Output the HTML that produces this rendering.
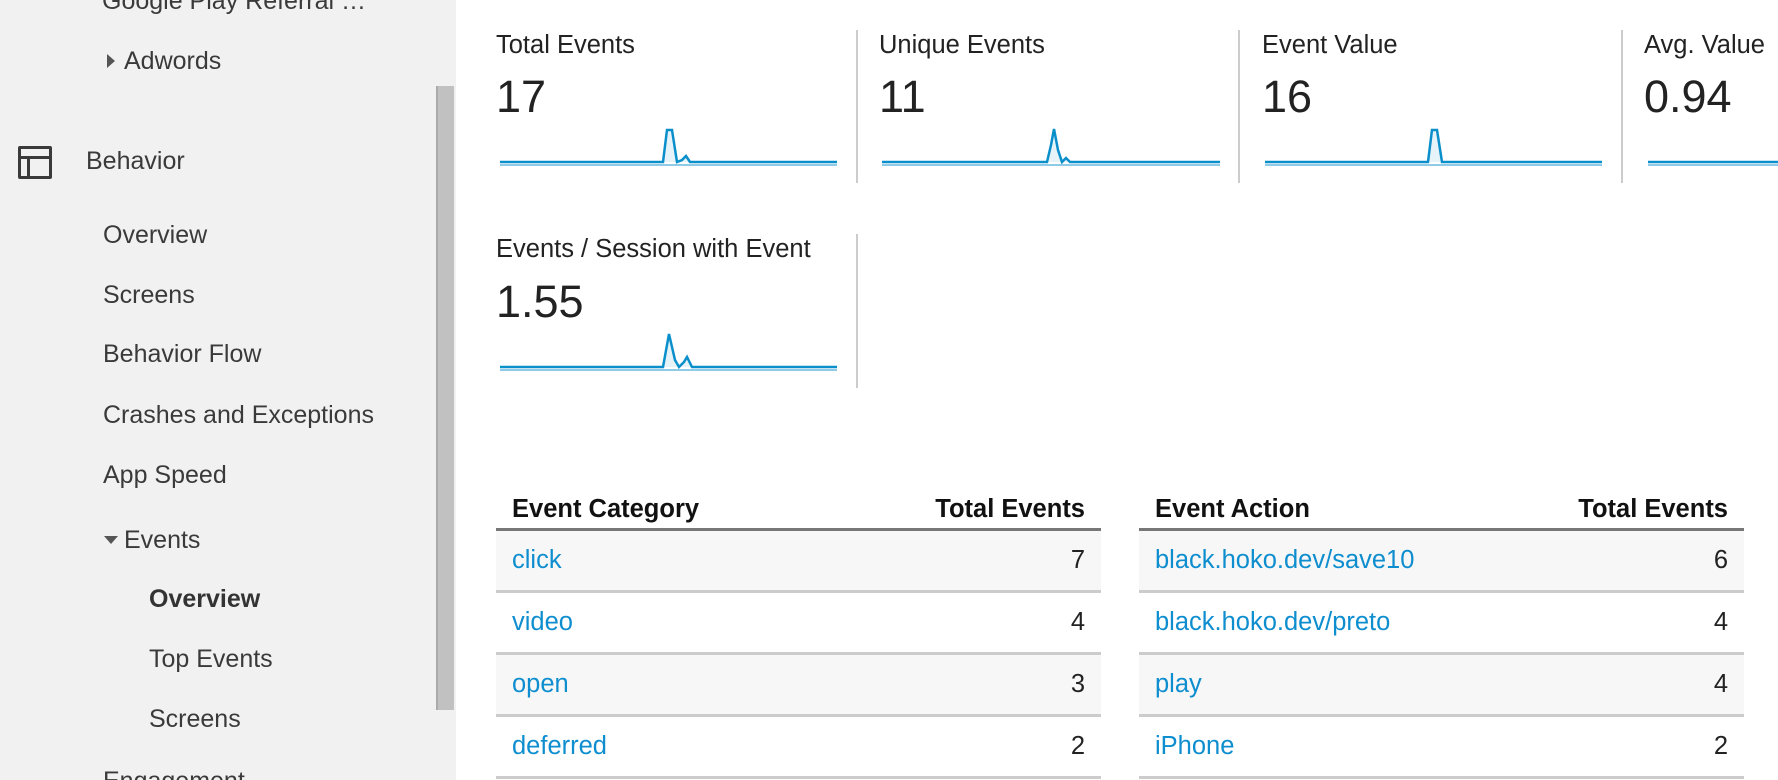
<!DOCTYPE html>
<html style="width:1778px;height:780px;overflow:hidden"><head><meta charset="utf-8"><style>
*{margin:0;padding:0;box-sizing:border-box}
body{width:1778px;height:780px;overflow:hidden;background:#fff;font-family:"Liberation Sans",Arial,sans-serif;position:relative}
.side{position:absolute;left:0;top:0;width:456px;height:780px;background:#f1f1f1;overflow:hidden}
.scroll{position:absolute;left:436px;top:86px;width:18px;height:624px;background:#c1c1c1;border-left:2px solid #ababab}
.s{position:absolute;font-size:25px;color:#3a3a3a;line-height:30px;white-space:nowrap}
.t{position:absolute;font-size:25.5px;color:#222;line-height:30px;white-space:nowrap}
.n{position:absolute;font-size:45px;color:#222;line-height:50px}
.div{position:absolute;width:2px;background:#ccc}
table{position:absolute;border-collapse:collapse;font-size:25.5px;top:491px}
th{height:38px;text-align:left;padding:0 16px;color:#111;border-bottom:3px solid #777;vertical-align:middle}
td{height:62px;padding:0 16px;border-bottom:3px solid #ccc;color:#222}
td.a{color:#0e8ecf}
tr.g td{background:#f7f7f7}
.r{text-align:right}
</style></head><body>
<div class="side">
<div class="s" style="left:102px;top:-14px">Google Play Referral …</div>
<div style="position:absolute;left:107px;top:54px;width:0;height:0;border-top:7px solid transparent;border-bottom:7px solid transparent;border-left:8px solid #555"></div>
<div class="s" style="left:124px;top:46px">Adwords</div>
<div style="position:absolute;left:18px;top:146px;width:34px;height:33px;border:3px solid #3a3a3a;border-radius:2px"></div>
<div style="position:absolute;left:21px;top:156px;width:28px;height:3px;background:#3a3a3a"></div>
<div style="position:absolute;left:27px;top:156px;width:3px;height:20px;background:#3a3a3a"></div>
<div class="s" style="left:86px;top:146px">Behavior</div>
<div class="s" style="left:103px;top:220px">Overview</div>
<div class="s" style="left:103px;top:280px">Screens</div>
<div class="s" style="left:103px;top:339px">Behavior Flow</div>
<div class="s" style="left:103px;top:400px">Crashes and Exceptions</div>
<div class="s" style="left:103px;top:460px">App Speed</div>
<div style="position:absolute;left:104px;top:536px;width:0;height:0;border-left:7px solid transparent;border-right:7px solid transparent;border-top:8px solid #555"></div>
<div class="s" style="left:124px;top:525px">Events</div>
<div class="s" style="left:149px;top:584px;font-weight:bold;color:#333">Overview</div>
<div class="s" style="left:149px;top:644px">Top Events</div>
<div class="s" style="left:149px;top:704px">Screens</div>
<div class="s" style="left:103px;top:766px">Engagement</div>
<div class="scroll"></div>
</div>

<div class="t" style="left:496px;top:30px">Total Events</div>
<div class="n" style="left:496px;top:72px">17</div>
<div class="t" style="left:879px;top:30px">Unique Events</div>
<div class="n" style="left:879px;top:72px">11</div>
<div class="t" style="left:1262px;top:30px">Event Value</div>
<div class="n" style="left:1262px;top:72px">16</div>
<div class="t" style="left:1644px;top:30px">Avg. Value</div>
<div class="n" style="left:1644px;top:72px">0.94</div>
<div class="div" style="left:856px;top:30px;height:153px"></div>
<div class="div" style="left:1238px;top:30px;height:153px"></div>
<div class="div" style="left:1621px;top:30px;height:153px"></div>
<div class="t" style="left:496px;top:234px">Events / Session with Event</div>
<div class="n" style="left:496px;top:277px">1.55</div>
<div class="div" style="left:856px;top:234px;height:154px"></div>

<svg width="1778" height="780" style="position:absolute;left:0;top:0" fill="none">
<g stroke="#0b8fcb" stroke-width="2.5" fill="rgba(5,141,199,0.1)">
<path d="M500 162 L663 162 L667 130 L672 130 L677 162 L682 160 L686 156 L690 162 L837 162"/>
<path d="M882 162 L1047 162 L1051 145 L1054 129 L1058 150 L1062 162 L1066 158 L1070 162 L1220 162"/>
<path d="M1265 162 L1428 162 L1432 130 L1437 130 L1442 162 L1602 162"/>
<path d="M1648 162 L1778 162"/>
<path d="M500 367 L663 367 L669 334 L675 360 L679 367 L684 362 L687 357 L692 367 L837 367"/>
</g>
<g stroke="#8fcbe6" stroke-width="2"><path d="M500 165 L837 165 M882 165 L1220 165 M1265 165 L1602 165 M1648 165 L1778 165 M500 370 L837 370"/></g>
</svg>

<table style="left:496px;width:605px">
<tr><th>Event Category</th><th class="r">Total Events</th></tr>
<tr class="g"><td class="a">click</td><td class="r">7</td></tr>
<tr><td class="a">video</td><td class="r">4</td></tr>
<tr class="g"><td class="a">open</td><td class="r">3</td></tr>
<tr><td class="a">deferred</td><td class="r">2</td></tr>
</table>
<table style="left:1139px;width:605px">
<tr><th>Event Action</th><th class="r">Total Events</th></tr>
<tr class="g"><td class="a">black.hoko.dev/save10</td><td class="r">6</td></tr>
<tr><td class="a">black.hoko.dev/preto</td><td class="r">4</td></tr>
<tr class="g"><td class="a">play</td><td class="r">4</td></tr>
<tr><td class="a">iPhone</td><td class="r">2</td></tr>
</table>
</body></html>
